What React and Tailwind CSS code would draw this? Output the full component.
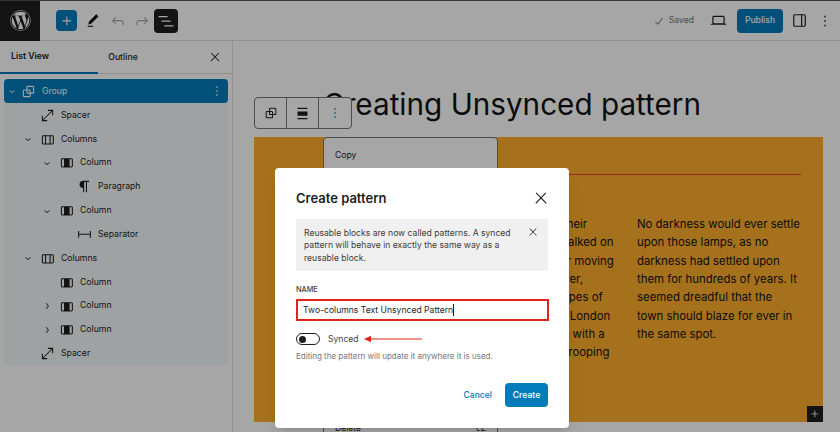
import React from 'react';
import { FaWordpress } from 'react-icons/fa';

const paths = {
    group: 'M18 4h-7c-1.1 0-2 .9-2 2v3H6c-1.1 0-2 .9-2 2v7c0 1.1.9 2 2 2h7c1.1 0 2-.9 2-2v-3h3c1.1 0 2-.9 2-2V6c0-1.1-.9-2-2-2zm-4.5 14c0 .3-.2.5-.5.5H6c-.3 0-.5-.2-.5-.5v-7c0-.3.2-.5.5-.5h3V13c0 1.1.9 2 2 2h2.5v3zm0-4.5H11c-.3 0-.5-.2-.5-.5v-2.5H13c.3 0 .5.2.5.5v2.5zm5-.5c0 .3-.2.5-.5.5h-3V11c0-1.1-.9-2-2-2h-2.5V6c0-.3.2-.5.5-.5h7c.3 0 .5.2.5.5v7z',
    spacer: 'M12.5 4v1.5h5L5.5 17.5v-5H4V20h7.5v-1.5h-5l12-12v5H20V4z',
    columns: 'M19 6H6c-1.1 0-2 .9-2 2v9c0 1.1.9 2 2 2h13c1.1 0 2-.9 2-2V8c0-1.1-.9-2-2-2zm-4.1 1.5v10H10v-10h4.9zM5.5 17V8c0-.3.2-.5.5-.5h2.5v10H6c-.3 0-.5-.2-.5-.5zm14 0c0 .3-.2.5-.5.5h-2.6v-10H19c.3 0 .5.2.5.5v9z',
    column: 'M19 6H6c-1.1 0-2 .9-2 2v9c0 1.1.9 2 2 2h13c1.1 0 2-.9 2-2V8c0-1.1-.9-2-2-2zM8.5 17.5H6c-.3 0-.5-.2-.5-.5V8c0-.3.2-.5.5-.5h2.5v10zm11-.5c0 .3-.2.5-.5.5h-2.6v-10H19c.3 0 .5.2.5.5v9z',
    paragraph: 'm9.99609 14v-.2251l.00391.0001v6.225h1.5v-14.5h2.5v14.5h1.5v-14.5h3v-1.5h-8.50391c-2.76142 0-5 2.23858-5 5 0 2.7614 2.23858 5 5 5z',
    separator: 'M4.5 12.5v4H3V7h1.5v3.987h15V7H21v9.5h-1.5v-4h-15Z',
    down: 'M17.5 11.6L12 16l-5.5-4.4.9-1.2L12 14l4.5-3.6 1 1.2z',
    right: 'M10.6 6L9.4 7l4.6 5-4.6 5 1.2 1 5.4-6z',
    plus: 'M11 12.5V17.5H12.5V12.5H17.5V11H12.5V6H11V11H6V12.5H11Z',
    brush: 'M20.1 5.1L16.9 2 6.2 12.7l-1.3 4.4 4.5-1.3L20.1 5.1zM4 20.8h8v-1.5H4v1.5z',
    undo: 'M18.3 11.7c-.6-.6-1.4-.9-2.3-.9H6.7l2.9-3.3-1.1-1-4.5 5L8.5 16l1-1-2.7-2.7H16c.5 0 .9.2 1.3.5 1 1 1 3.4 1 4.5v.3h1.5v-.2c0-1.5 0-4.3-1.5-5.7z',
    redo: 'M15.6 6.5l-1.1 1 2.9 3.3H8c-.9 0-1.7.3-2.3.9-1.4 1.5-1.4 4.2-1.4 5.6v.2h1.5v-.3c0-1.1 0-3.5 1-4.5.3-.3.7-.5 1.3-.5h9.2L14.5 15l1.1 1.1 4.6-4.6-4.6-5z',
    listView: 'M3 6h11v1.5H3V6zm3.5 5.5h11V13h-11v-1.5zM21 17H10v1.5h11V17z',
    close: 'M13 11.8l6.1-6.3-1-1-6.1 6.2-6.1-6.2-1 1 6.1 6.3-6.5 6.7 1 1 6.5-6.6 6.5 6.6 1-1z',
    check: 'M16.7 7.1l-6.3 8.5-3.3-2.5-.9 1.2 4.5 3.4L17.9 8z',
    desktop: 'M20.5 16h-.7V8c0-1.1-.9-2-2-2H6.2c-1.1 0-2 .9-2 2v8h-.7c-.8 0-1.5.7-1.5 1.5h20c0-.8-.7-1.5-1.5-1.5zM5.7 8c0-.3.2-.5.5-.5h11.6c.3 0 .5.2.5.5v7.6H5.7V8z',
    drawer: 'M18 4H6c-1.1 0-2 .9-2 2v12c0 1.1.9 2 2 2h12c1.1 0 2-.9 2-2V6c0-1.1-.9-2-2-2zm-4 14.5H6c-.3 0-.5-.2-.5-.5V6c0-.3.2-.5.5-.5h8v13zm4.5-.5c0 .3-.2.5-.5.5h-2.5v-13H18c.3 0 .5.2.5.5v12z',
    more: 'M13 19h-2v-2h2v2zm0-6h-2v-2h2v2zm0-6h-2V5h2v2z',
    align: 'M19 5.5H5V4h14v1.5ZM19 20H5v-1.5h14V20ZM5 9h14v6H5V9Z',
};

const Icon = ({ name, size = 24, className = '' }) => (
    <svg viewBox="0 0 24 24" width={size} height={size} fill="currentColor" className={`shrink-0 ${className}`}>
        <path d={paths[name]} />
        {name === 'column' && <rect x="8.5" y="7" width="7" height="11" />}
    </svg>
);

const levels = ['pl-0', 'pl-[19px]', 'pl-[38px]', 'pl-[56px]'];

const rows = [
    { label: 'Group', icon: 'group', level: 0, chevron: 'down', active: true },
    { label: 'Spacer', icon: 'spacer', level: 1 },
    { label: 'Columns', icon: 'columns', level: 1, chevron: 'down' },
    { label: 'Column', icon: 'column', level: 2, chevron: 'down' },
    { label: 'Paragraph', icon: 'paragraph', level: 3 },
    { label: 'Column', icon: 'column', level: 2, chevron: 'down' },
    { label: 'Separator', icon: 'separator', level: 3 },
    { label: 'Columns', icon: 'columns', level: 1, chevron: 'down' },
    { label: 'Column', icon: 'column', level: 2 },
    { label: 'Column', icon: 'column', level: 2, chevron: 'right' },
    { label: 'Column', icon: 'column', level: 2, chevron: 'right' },
    { label: 'Spacer', icon: 'spacer', level: 1 },
];

const leftLines = ['Lamps burned out in their', 'and the people who walked on', 'the old bridges or over moving', 'upon the dark calm river,', 'casting the darker shapes of', 'that were cold around London', 'and refilled the streets with a', 'kind of cold and sad drooping'];
const rightLines = ['No darkness would ever settle', 'upon those lamps, as no', 'darkness had settled upon', 'them for hundreds of years. It', 'seemed dreadful that the', 'town should blaze for ever in', 'the same spot.'];

const TopBar = () => (
    <header className="h-[41px] shrink-0 flex items-center border-b border-[#e0e0e0] border-t border-t-[#555]">
        <div className="w-10 h-10 bg-[#1e1e1e] flex items-center justify-center text-white">
            <FaWordpress size={21} />
        </div>
        <button className="ml-4 w-[21px] h-[21px] rounded-sm bg-[#007cba] text-white flex items-center justify-center">
            <Icon name="plus" size={18} />
        </button>
        <Icon name="brush" size={16} className="ml-[8px]" />
        <Icon name="undo" size={18} className="ml-[8px] text-[#aaa]" />
        <Icon name="redo" size={18} className="ml-[6px] text-[#aaa]" />
        <button className="ml-[3px] w-6 h-6 rounded-sm bg-[#1e1e1e] text-white flex items-center justify-center">
            <Icon name="listView" size={20} />
        </button>
        <div className="ml-auto flex items-center text-[#757575] text-[8.6px]">
            <Icon name="check" size={16} />
            <span className="ml-[2px]">Saved</span>
        </div>
        <Icon name="desktop" size={19} className="ml-[15px] text-[#1e1e1e]" />
        <button className="ml-[9px] w-[46px] h-6 rounded-sm bg-[#007cba] text-white text-[8.6px] font-medium">Publish</button>
        <Icon name="drawer" size={19} className="ml-[7px] text-[#1e1e1e]" />
        <Icon name="more" size={18} className="ml-[7px] mr-[6px] text-[#1e1e1e]" />
    </header>
);

const Sidebar = () => (
    <aside className="w-[233px] shrink-0 border-r border-[#e0e0e0] flex flex-col">
        <div className="h-[33px] shrink-0 flex items-stretch border-b border-[#e0e0e0] text-[8.7px] font-semibold text-[#1e1e1e]">
            <div className="w-[98px] pl-[11px] pt-px flex items-center border-b-2 border-[#007cba] -mb-px">List View</div>
            <div className="w-[98px] flex items-center justify-center pt-px pr-[48px] font-medium whitespace-nowrap">Outline</div>
            <div className="flex-1 flex items-center justify-center pl-[2px]">
                <Icon name="close" size={14} />
            </div>
        </div>
        <ul className="mt-[5px] mx-1 bg-[#f4f9f9]">
            {rows.map((row, i) => (
                <li
                    key={i}
                    className={`h-[23.85px] pt-px flex items-center text-[8.7px] ${levels[row.level]} ${row.active ? 'bg-[#007cba] text-white rounded-sm' : 'text-[#1e1e1e]'}`}
                >
                    <span className="w-4 flex justify-center">
                        {row.chevron && <Icon name={row.chevron} size={12} className={row.level > 0 ? '-translate-x-[3px]' : ''} />}
                    </span>
                    <span className="w-4 flex justify-center">
                        <Icon name={row.icon} size={17} />
                    </span>
                    <span className="ml-[6px]">{row.label}</span>
                    {row.active && <Icon name="more" size={16} className="ml-auto mr-[3px]" />}
                </li>
            ))}
        </ul>
    </aside>
);

const Canvas = () => (
    <main className="flex-1 relative pt-[44px] pl-[21px] pr-[17px] pb-[10px] flex flex-col min-w-0">
        <h1 className="text-[29.7px] leading-[38px] pl-[69px] text-[#111] whitespace-nowrap">Creating Unsynced pattern</h1>
        <section className="mt-[14px] flex-1 bg-[#ffae2c] relative">
            <hr className="absolute left-[245px] right-[22px] top-[37px] border-0 h-px bg-[#e63c2e]" />
            <div className="h-full flex justify-end gap-6 pr-[22px] pt-[78px] text-[11.4px] leading-[18.35px] text-[#111]">
                <div className="w-[164px] whitespace-nowrap">
                    {leftLines.map((line) => <div key={line}>{line}</div>)}
                </div>
                <div className="w-[164px] whitespace-nowrap">
                    {rightLines.map((line) => <div key={line}>{line}</div>)}
                </div>
            </div>
            <div className="absolute right-0 bottom-0 w-4 h-4 bg-[#1e1e1e] text-white flex items-center justify-center">
                <Icon name="plus" size={14} />
            </div>
        </section>

        {/* Block toolbar */}
        <div className="absolute left-[21px] top-[56px] h-8 flex bg-white border border-[#777] rounded-sm text-[#1e1e1e]">
            <div className="w-8 flex items-center justify-center border-r border-[#777]"><Icon name="group" size={16} /></div>
            <div className="w-8 flex items-center justify-center border-r border-[#777]"><Icon name="align" size={17} /></div>
            <div className="w-8 flex items-center justify-center text-[#007cba]"><Icon name="more" size={16} /></div>
        </div>

        {/* Block options menu, runs past the bottom of the page */}
        <div className="absolute left-[90px] top-[96px] w-[175px] h-[320px] bg-white border border-[#777] rounded-sm px-[11px] py-[10px] text-[8.6px] text-[#1e1e1e] flex flex-col justify-between">
            <div className="mt-[1px]">Copy</div>
            <div className="flex justify-between mb-[11px]"><span>Delete</span><span>⌃⌥Z</span></div>
        </div>
    </main>
);

const Modal = () => (
    <div className="absolute left-[275px] top-[168px] w-[294px] h-[260px] bg-white rounded-sm shadow-lg px-[21px] pt-[21px] text-[#1e1e1e]">
        <div className="flex items-center justify-between h-[18px]">
            <h2 className="text-[13px] font-semibold pt-px">Create pattern</h2>
            <Icon name="close" size={18} className="-mr-[2px]" />
        </div>
        <div className="mt-[12px] h-[52px] bg-[#f0f0f0] pl-2 pr-[8px] flex text-[8.6px] leading-[12.3px] text-[#3c3c3c] pt-[8px]">
            <p className="w-[212px]">Reusable blocks are now called patterns. A synced pattern will behave in exactly the same way as a reusable block.</p>
            <Icon name="close" size={12} className="ml-auto mr-[1px] -mt-px" />
        </div>
        <div className="mt-[14px] text-[7.3px] leading-[9px] font-medium uppercase text-[#3c3c3c]">Name</div>
        <div className="mt-[5px] h-[22px] w-[253px] border-2 border-[#e2231a] flex items-center pl-[5px] text-[8.6px]">
            <span>Two-columns Text Unsynced Pattern</span>
            <span className="w-px h-[12px] bg-[#1e1e1e]" />
        </div>
        <div className="mt-[12px] h-[12px] flex items-center">
            <div className="w-6 h-3 border border-[#1e1e1e] rounded-full flex items-center pl-[2px]">
                <span className="w-[7px] h-[7px] bg-[#1e1e1e] rounded-full" />
            </div>
            <span className="ml-2 text-[8.6px] text-[#3c3c3c]">Synced</span>
            <svg viewBox="0 0 58 8" width="58" height="8" className="ml-[5px]">
                <path d="M58 4H5" stroke="#e2231a" strokeWidth="1" />
                <path d="M0 4L7 .8V7.2Z" fill="#e2231a" />
            </svg>
        </div>
        <p className="mt-[6px] text-[8px] leading-[11px] text-[#757575]">Editing the pattern will update it anywhere it is used.</p>
        <div className="mt-[21px] flex items-center justify-end gap-[13px] pr-0">
            <button className="text-[8.6px] font-medium text-[#007cba]">Cancel</button>
            <button className="w-[43px] h-6 rounded-sm bg-[#007cba] text-white text-[8.6px] font-medium">Create</button>
        </div>
    </div>
);

const App = () => (
    <div className="relative w-[840px] h-[432px] overflow-hidden bg-white font-['Inter',sans-serif]">
        <div className="h-full flex flex-col">
            <TopBar />
            <div className="flex-1 flex min-h-0">
                <Sidebar />
                <Canvas />
            </div>
        </div>
        {/* Dim layer under the dialog */}
        <div className="absolute inset-0 bg-black/35" />
        <Modal />
    </div>
);

export default App;
